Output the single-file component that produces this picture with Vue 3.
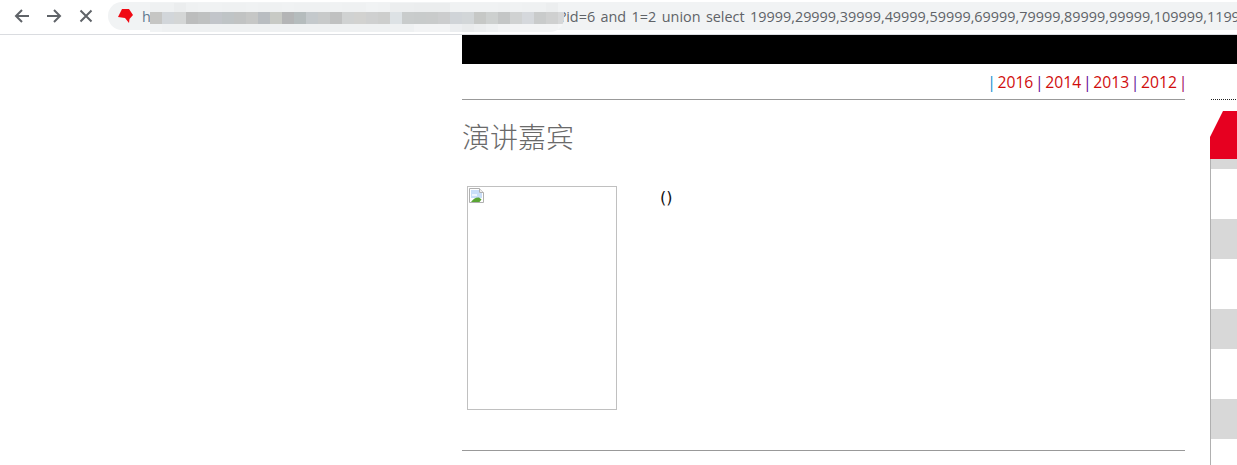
<template>
  <div class="window">
    <header class="toolbar">
      <div class="nav-buttons">
        <svg class="nav-icon" width="16" height="16" viewBox="0 0 16 16">
          <path d="M15 8H2M8 2L2 8l6 6" />
        </svg>
        <svg class="nav-icon" width="16" height="16" viewBox="0 0 16 16">
          <path d="M1 8h13M8 2l6 6-6 6" />
        </svg>
        <svg class="nav-icon" width="16" height="16" viewBox="0 0 16 16">
          <path d="M2.500 2.500l11 11M13.500 2.500l-11 11" />
        </svg>
      </div>
      <div class="omnibox">
        <svg class="favicon" width="16" height="16" viewBox="0 0 16 16">
          <path d="M0 9L4 1h7l4 6-3.500 4-0.500 4-4-5z" />
        </svg>
        <span class="url-head">h</span>
        <div class="mosaic">
          <div v-for="(row, r) in mosaicRows" :key="r" class="mosaic-row" :class="'row-' + r">
            <i v-for="(c, i) in row" :key="i" :style="{ background: c }"></i>
          </div>
        </div>
        <span class="url-tail">?id=6 and 1=2 union select 19999,29999,39999,49999,59999,69999,79999,89999,99999,109999,119999,129999</span>
      </div>
    </header>

    <div class="black-bar"></div>

    <div class="page">
      <main class="content">
        <nav class="years">
          <span class="bar bar-blue">|</span>
          <a>2016</a>
          <span class="bar">|</span>
          <a>2014</a>
          <span class="bar">|</span>
          <a>2013</a>
          <span class="bar">|</span>
          <a>2012</a>
          <span class="bar bar-end">|</span>
        </nav>
        <h1 class="title">演讲嘉宾</h1>
        <section class="speaker">
          <div class="photo">
            <svg width="16" height="16" viewBox="0 0 16 16">
              <path d="M0.500 0.500h10l4 4v10h-14z" fill="#fff" stroke="#b0b0b0" />
              <path d="M10.500 0.500v4h4" fill="#ececec" stroke="#b0b0b0" />
              <path d="M2 2h8v3h3v5H2z" fill="#c9def8" />
              <path d="M3 6h5v2H3z" fill="#eef5fd" />
              <path d="M2 14c2-3 5-5 8-4.500l2.500 2-2 2.500z" fill="#5aa534" />
            </svg>
          </div>
          <p class="speaker-text">()</p>
        </section>
        <hr class="rule" />
      </main>

      <aside class="side">
        <div class="dots"></div>
        <div class="red-tab"></div>
        <ul class="stripes">
          <li v-for="(s, i) in stripes" :key="i" :class="{ grey: s.grey }" :style="{ height: s.h + 'px' }"></li>
        </ul>
      </aside>
    </div>
  </div>
</template>

<script setup>
// pixelated part of the address
const mosaicRows = [
  ['#eff1f2', '#eff1f2', '#ebedee', '#eff1f2', '#f0f2f3', '#f0f2f3', '#eff1f2', '#eff1f2', '#f0f2f3', '#eff1f2', '#eff1f2', '#f0f2f3', '#eff1f2', '#eff1f2', '#eff1f2', '#f0f2f3', '#eff1f2', '#eff1f2', '#f1f3f4', '#f0f2f3', '#eceeef', '#eceeef', '#ebedee', '#ebedee', '#ebedee', '#f0f2f3', '#f0f2f3', '#f0f2f3', '#f0f2f3', '#eff1f2', '#f0f2f3', '#eff1f2', '#eff1f2', '#eceeef', '#f1f3f4'],
  ['#c6c6c4', '#d2d6da', '#d4d6d6', '#bcbdbd', '#bfc1c1', '#c2c5ca', '#bfc4c6', '#c1c3c3', '#c6c7c6', '#b9bdc1', '#c8cac5', '#b4b5b6', '#b5bcbd', '#c4c9cc', '#c8caca', '#c0c1c1', '#d0d2d2', '#d2d2d0', '#cfd0d0', '#cdcecd', '#dde2e5', '#c9cccc', '#c8cbcb', '#c9cbcb', '#cccdce', '#d0d4d8', '#d2d6d8', '#c6c8c6', '#cdd0cf', '#c4c6c6', '#d0d2d2', '#d5d8dc', '#c9cbcb', '#cfd0d0', '#d6d7d8'],
  ['#f1f3f4', '#eff1f2', '#eff1f2', '#eff1f2', '#eff1f2', '#eff1f2', '#eff1f2', '#eff1f2', '#eff1f2', '#eff1f2', '#eff1f2', '#eff1f2', '#eff1f2', '#eff1f2', '#eff1f2', '#eff1f2', '#eff1f2', '#eff1f2', '#eff1f2', '#eff1f2', '#eff1f2', '#eff1f2', '#f3f4f5', '#f3f4f5', '#f3f4f5', '#eceef0', '#e9ebec', '#eceeef', '#eff1f2', '#f3f4f5', '#f3f4f5', '#f3f4f5', '#f3f4f5', '#f3f4f5', '#f5f6f7']
]

const stripes = [
  { h: 10, grey: true },
  { h: 50 },
  { h: 40, grey: true },
  { h: 50 },
  { h: 40, grey: true },
  { h: 50 },
  { h: 40, grey: true },
  { h: 26 }
]
</script>

<style>
html,
body {
  margin: 0;
  overflow: hidden;
  background: #fff;
}
</style>

<style scoped>
.window {
  width: 1237px;
  height: 465px;
  overflow: hidden;
  font-family: "Open Sans", "Noto Sans CJK SC", sans-serif;
}

.toolbar {
  height: 34px;
  display: flex;
  border-bottom: 1px solid #dadce0;
  background: #fff;
  overflow: hidden;
}

.nav-buttons {
  width: 108px;
  flex: none;
  display: flex;
  gap: 16px;
  padding: 8px 0 0 14px;
  box-sizing: border-box;
}

.nav-icon {
  fill: none;
  stroke: #5f6368;
  stroke-width: 2;
}

.omnibox {
  margin-top: 2px;
  height: 28px;
  flex: none;
  width: 1200px;
  display: flex;
  align-items: center;
  padding-left: 10px;
  box-sizing: border-box;
  background: #f1f3f4;
  border-radius: 14px 0 0 14px;
  font-size: 14.4px;
  word-spacing: 1.7px;
  color: #5f6368;
  white-space: nowrap;
}

.favicon {
  flex: none;
  fill: #f00a14;
  margin-right: 8px;
}

.url-head {
  width: 8px;
  flex: none;
  color: #5f7a90;
}

.mosaic {
  flex: none;
  width: 414px;
  height: 29px;
  margin-top: 3px;
  margin-right: -4px;
  position: relative;
  z-index: 1;
  overflow: hidden;
  border-radius: 0 0 14px 0;
}

.mosaic-row {
  display: flex;
}

.mosaic-row i {
  display: block;
  flex: none;
  width: 12px;
  height: 100%;
}

.row-0 {
  height: 9px;
}

.row-1 {
  height: 12px;
}

.row-2 {
  height: 8px;
}

.url-tail {
  flex: none;
}

.black-bar {
  height: 29px;
  margin-left: 462px;
  background: #000;
}

.page {
  display: flex;
  margin-left: 462px;
}

.content {
  width: 723px;
  flex: none;
}

.years {
  height: 36px;
  box-sizing: border-box;
  padding: 6px 0 0;
  display: flex;
  justify-content: flex-end;
  gap: 4px;
  font-size: 15.7px;
  line-height: 24px;
  border-bottom: 1px solid #999;
}

.years a {
  color: #d00c0c;
}

.bar {
  width: 4px;
  display: flex;
  justify-content: center;
  color: #660a96;
}

.bar-blue {
  color: #0a8fd0;
}

.bar-end {
  color: #a00060;
}

.title {
  margin: 16px 0 0;
  font-size: 28px;
  line-height: 40px;
  font-weight: 300;
  color: #6a6a6a;
  font-family: "Noto Sans CJK SC", sans-serif;
}

.speaker {
  display: flex;
  margin: 30px 0 0 5px;
}

.photo {
  width: 150px;
  height: 224px;
  box-sizing: border-box;
  border: 1px solid #c0c0c0;
  padding: 1px;
  flex: none;
}

.photo svg {
  display: block;
}

.speaker-text {
  margin: 0 0 0 43px;
  font-family: "DejaVu Sans", sans-serif;
  font-size: 16px;
  line-height: 24px;
  color: #111;
}

.rule {
  margin: 40px 0 0;
  border: 0;
  border-top: 1px solid #999;
}

.side {
  margin-left: 25px;
  width: 27px;
  flex: none;
  padding-top: 35px;
}

.dots {
  height: 1px;
  margin-left: 1px;
  background: repeating-linear-gradient(90deg, #222 0 1px, #fff 1px 2px);
}

.red-tab {
  height: 48px;
  margin-top: 11px;
  background: #e60020;
  clip-path: polygon(13px 0, 100% 0, 100% 100%, 0 100%, 0 26px);
}

.stripes {
  list-style: none;
  margin: 0;
  padding: 0;
  border-left: 1px solid #b0b0b0;
}

.stripes li.grey {
  background: #d8d8d8;
}
</style>
